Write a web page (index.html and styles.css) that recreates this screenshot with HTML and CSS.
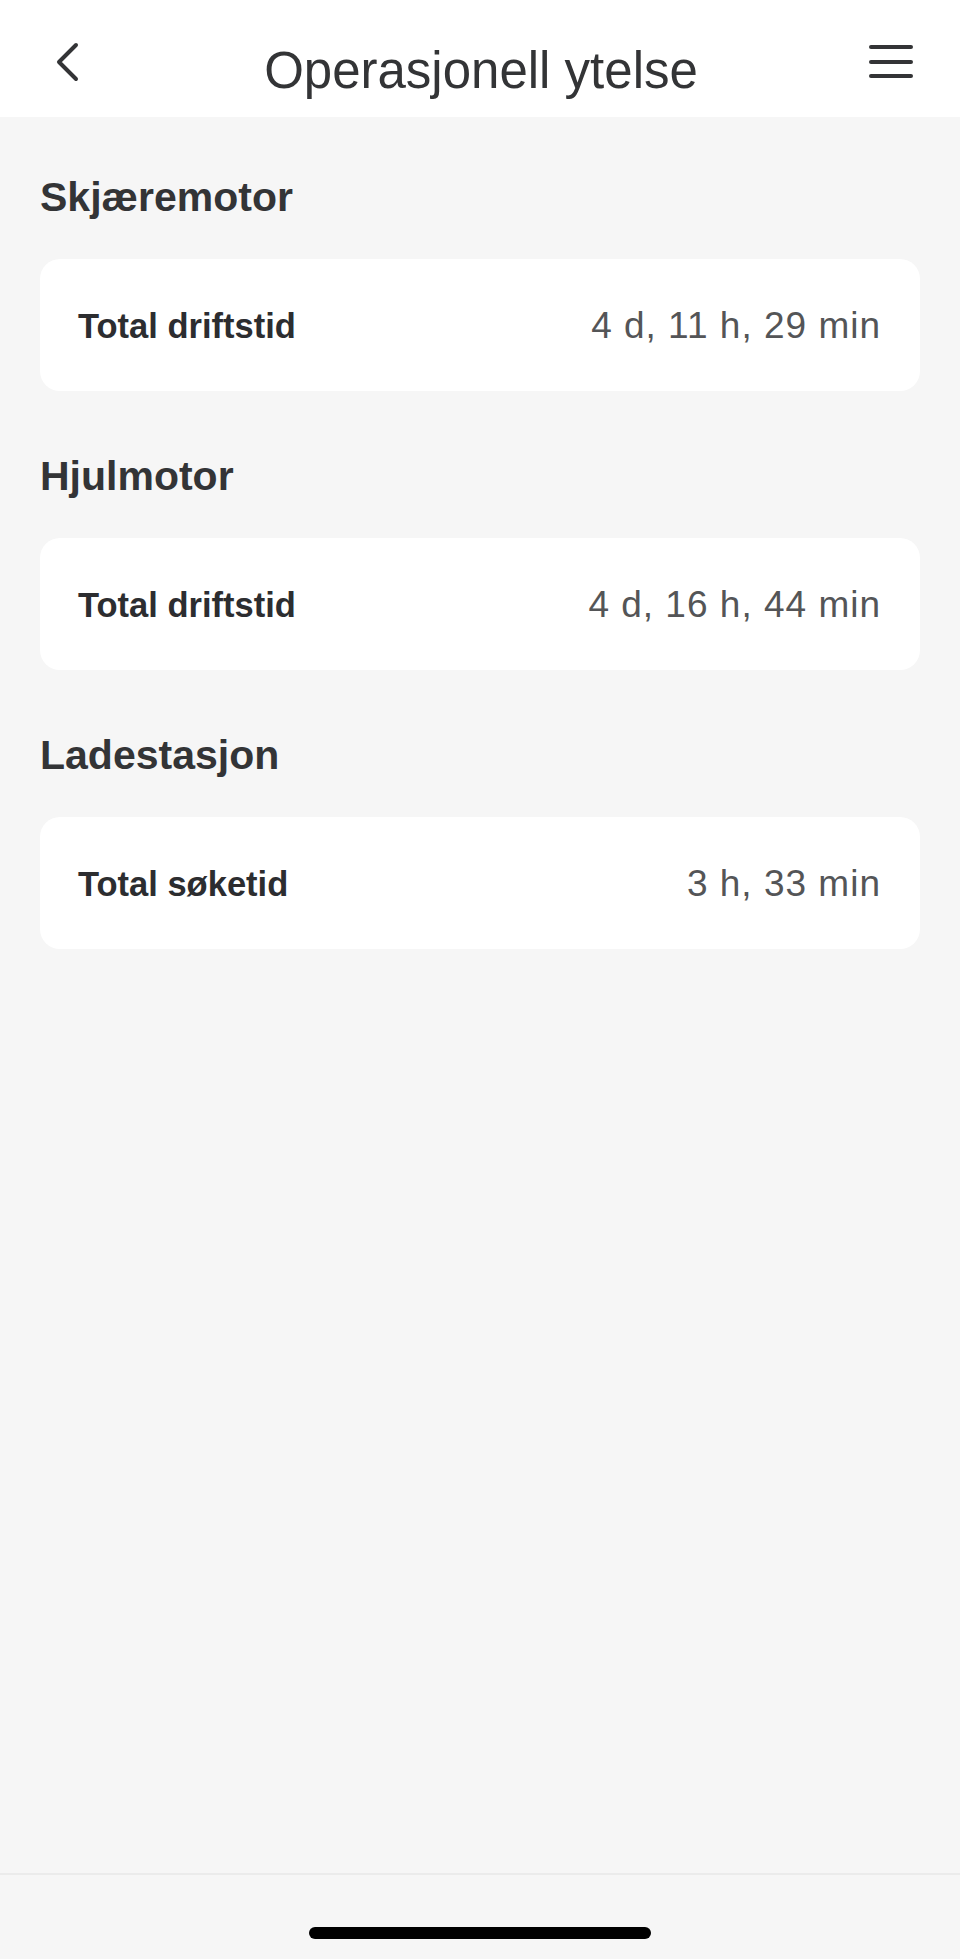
FILE: index.html
```html
<!DOCTYPE html>
<html lang="no">
<head>
    <meta charset="UTF-8">
    <meta name="viewport" content="width=device-width, initial-scale=1.0">
    <title>Operasjonell ytelse</title>
    <link rel="stylesheet" href="styles.css">
</head>
<body>
    <div class="app">
        <header class="topbar">
            <button class="icon-btn back" aria-label="Tilbake">
                <svg width="25" height="42" viewBox="0 0 25 42">
                    <polyline points="21,4 4,21 21,38" fill="none" stroke="#333436" stroke-width="4" stroke-linecap="round" stroke-linejoin="round"/>
                </svg>
            </button>
            <h1 class="title">Operasjonell ytelse</h1>
            <button class="icon-btn menu" aria-label="Meny">
                <svg width="48" height="36" viewBox="0 0 48 36">
                    <g stroke="#333436" stroke-width="4" stroke-linecap="round">
                        <line x1="4" y1="3" x2="44" y2="3"/>
                        <line x1="4" y1="18" x2="44" y2="18"/>
                        <line x1="4" y1="32" x2="44" y2="32"/>
                    </g>
                </svg>
            </button>
        </header>

        <main class="content">
            <section class="group">
                <h2>Skjæremotor</h2>
                <div class="card">
                    <span class="label">Total driftstid</span>
                    <span class="value">4 d, 11 h, 29 min</span>
                </div>
            </section>

            <section class="group">
                <h2>Hjulmotor</h2>
                <div class="card">
                    <span class="label">Total driftstid</span>
                    <span class="value">4 d, 16 h, 44 min</span>
                </div>
            </section>

            <section class="group">
                <h2>Ladestasjon</h2>
                <div class="card">
                    <span class="label">Total søketid</span>
                    <span class="value">3 h, 33 min</span>
                </div>
            </section>
        </main>

        <footer class="home-area">
            <div class="home-indicator"></div>
        </footer>
    </div>
</body>
</html>
```

FILE: styles.css
```css
/* Reset básico */
body, h1, h2, button {
    margin: 0;
    padding: 0;
}

body {
    font-family: "Liberation Sans", Arial, sans-serif;
    background-color: #f6f6f6;
    color: #333436;
}

.app {
    display: flex;
    flex-direction: column;
    min-height: 100vh;
}

/* Topo */
.topbar {
    display: grid;
    grid-template-columns: 1fr auto 1fr;
    align-items: start;
    height: 117px;
    padding: 0 45px 0 47px;
    background-color: #fff;
    box-sizing: border-box;
}

.icon-btn {
    background: none;
    border: none;
    cursor: pointer;
    line-height: 0;
}

.icon-btn.back {
    justify-self: start;
    margin-top: 41px;
    margin-left: 8px;
}

.icon-btn.menu {
    justify-self: end;
    margin-top: 44px;
}

.title {
    margin-top: 41px;
    font-size: 51px;
    line-height: 60px;
    font-weight: normal;
    color: #333436;
}

/* Conteúdo */
.content {
    flex: 1;
    padding: 56px 40px 0;
}

.group {
    margin-bottom: 61px;
}

.group h2 {
    font-size: 41px;
    line-height: 49px;
    font-weight: bold;
    color: #333436;
    margin-bottom: 37px;
}

.card {
    display: flex;
    justify-content: space-between;
    align-items: center;
    height: 132px;
    padding: 2px 40px 0 38px;
    background-color: #fff;
    border-radius: 20px;
    box-sizing: border-box;
}

.label {
    font-size: 34.5px;
    font-weight: bold;
    color: #2c2d30;
}

.value {
    font-size: 37px;
    letter-spacing: 1px;
    margin-right: -1px;
    color: #545557;
}

/* Indicador inicial */
.home-area {
    height: 86px;
    border-top: 2px solid #ebebeb;
    box-sizing: border-box;
    display: flex;
    justify-content: center;
}

.home-indicator {
    width: 342px;
    height: 12px;
    margin-top: 52px;
    border-radius: 6px;
    background-color: #000;
}
```
